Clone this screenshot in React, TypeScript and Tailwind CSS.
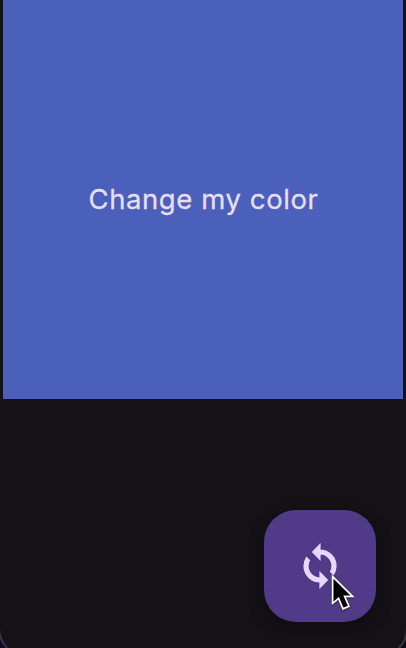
export default function App() {
  return (
    <main className="relative h-[648px] w-[406px] overflow-hidden bg-[#0c0a1c] font-['Inter','Liberation_Sans',sans-serif]">
      <div className="-mx-0.5 flex h-[658px] flex-col overflow-hidden rounded-b-[30px] border-x-2 border-b-2 border-[#37343c] bg-[#141217]">
        <section className="mx-[3px] flex h-[399px] items-center justify-center bg-[#4a60bb] pb-0.5 pl-px">
          <p className="text-[27.5px] leading-10 tracking-[0.58px] text-[#e6dff0] [-webkit-text-stroke:0.3px_#e6dff0]">
            Change my color
          </p>
        </section>
        <div className="flex justify-end pt-[111px] pr-[30px]">
          <button
            aria-label="Change color"
            className="flex size-28 items-center justify-center rounded-[32px] bg-[#513a87] shadow-[0_6px_14px_3px_rgba(0,0,0,0.25)]"
          >
            <svg
              viewBox="0 0 24 24"
              strokeMiterlimit="10"
              className="size-12 fill-[#e8d8ff] stroke-[#e8d8ff] stroke-[0.6]"
            >
              <path d="M12 4V1.2L8.3 5l3.7 3.8V6c3.31 0 6 2.69 6 6 0 1.01-.25 1.97-.7 2.8l1.46 1.46C19.54 15.03 20 13.57 20 12c0-4.42-3.58-8-8-8zm0 14c-3.31 0-6-2.69-6-6 0-1.01.25-1.97.7-2.8L5.24 7.74C4.46 8.97 4 10.43 4 12c0 4.42 3.58 8 8 8v2.8l3.7-3.8-3.7-3.8v2.8z" />
            </svg>
          </button>
        </div>
      </div>
      <svg
        viewBox="0 0 28 40"
        className="absolute top-[572px] left-[330px] h-10 w-7 drop-shadow-[0_1px_1px_rgba(0,0,0,0.4)]"
      >
        <path
          d="M2.6 4.6V31.3L8.6 26.4L13 36.8L18.9 34.2L14.6 24.3H22.6Z"
          fill="#000"
          stroke="#fff"
          strokeWidth="1.7"
        />
      </svg>
    </main>
  );
}
